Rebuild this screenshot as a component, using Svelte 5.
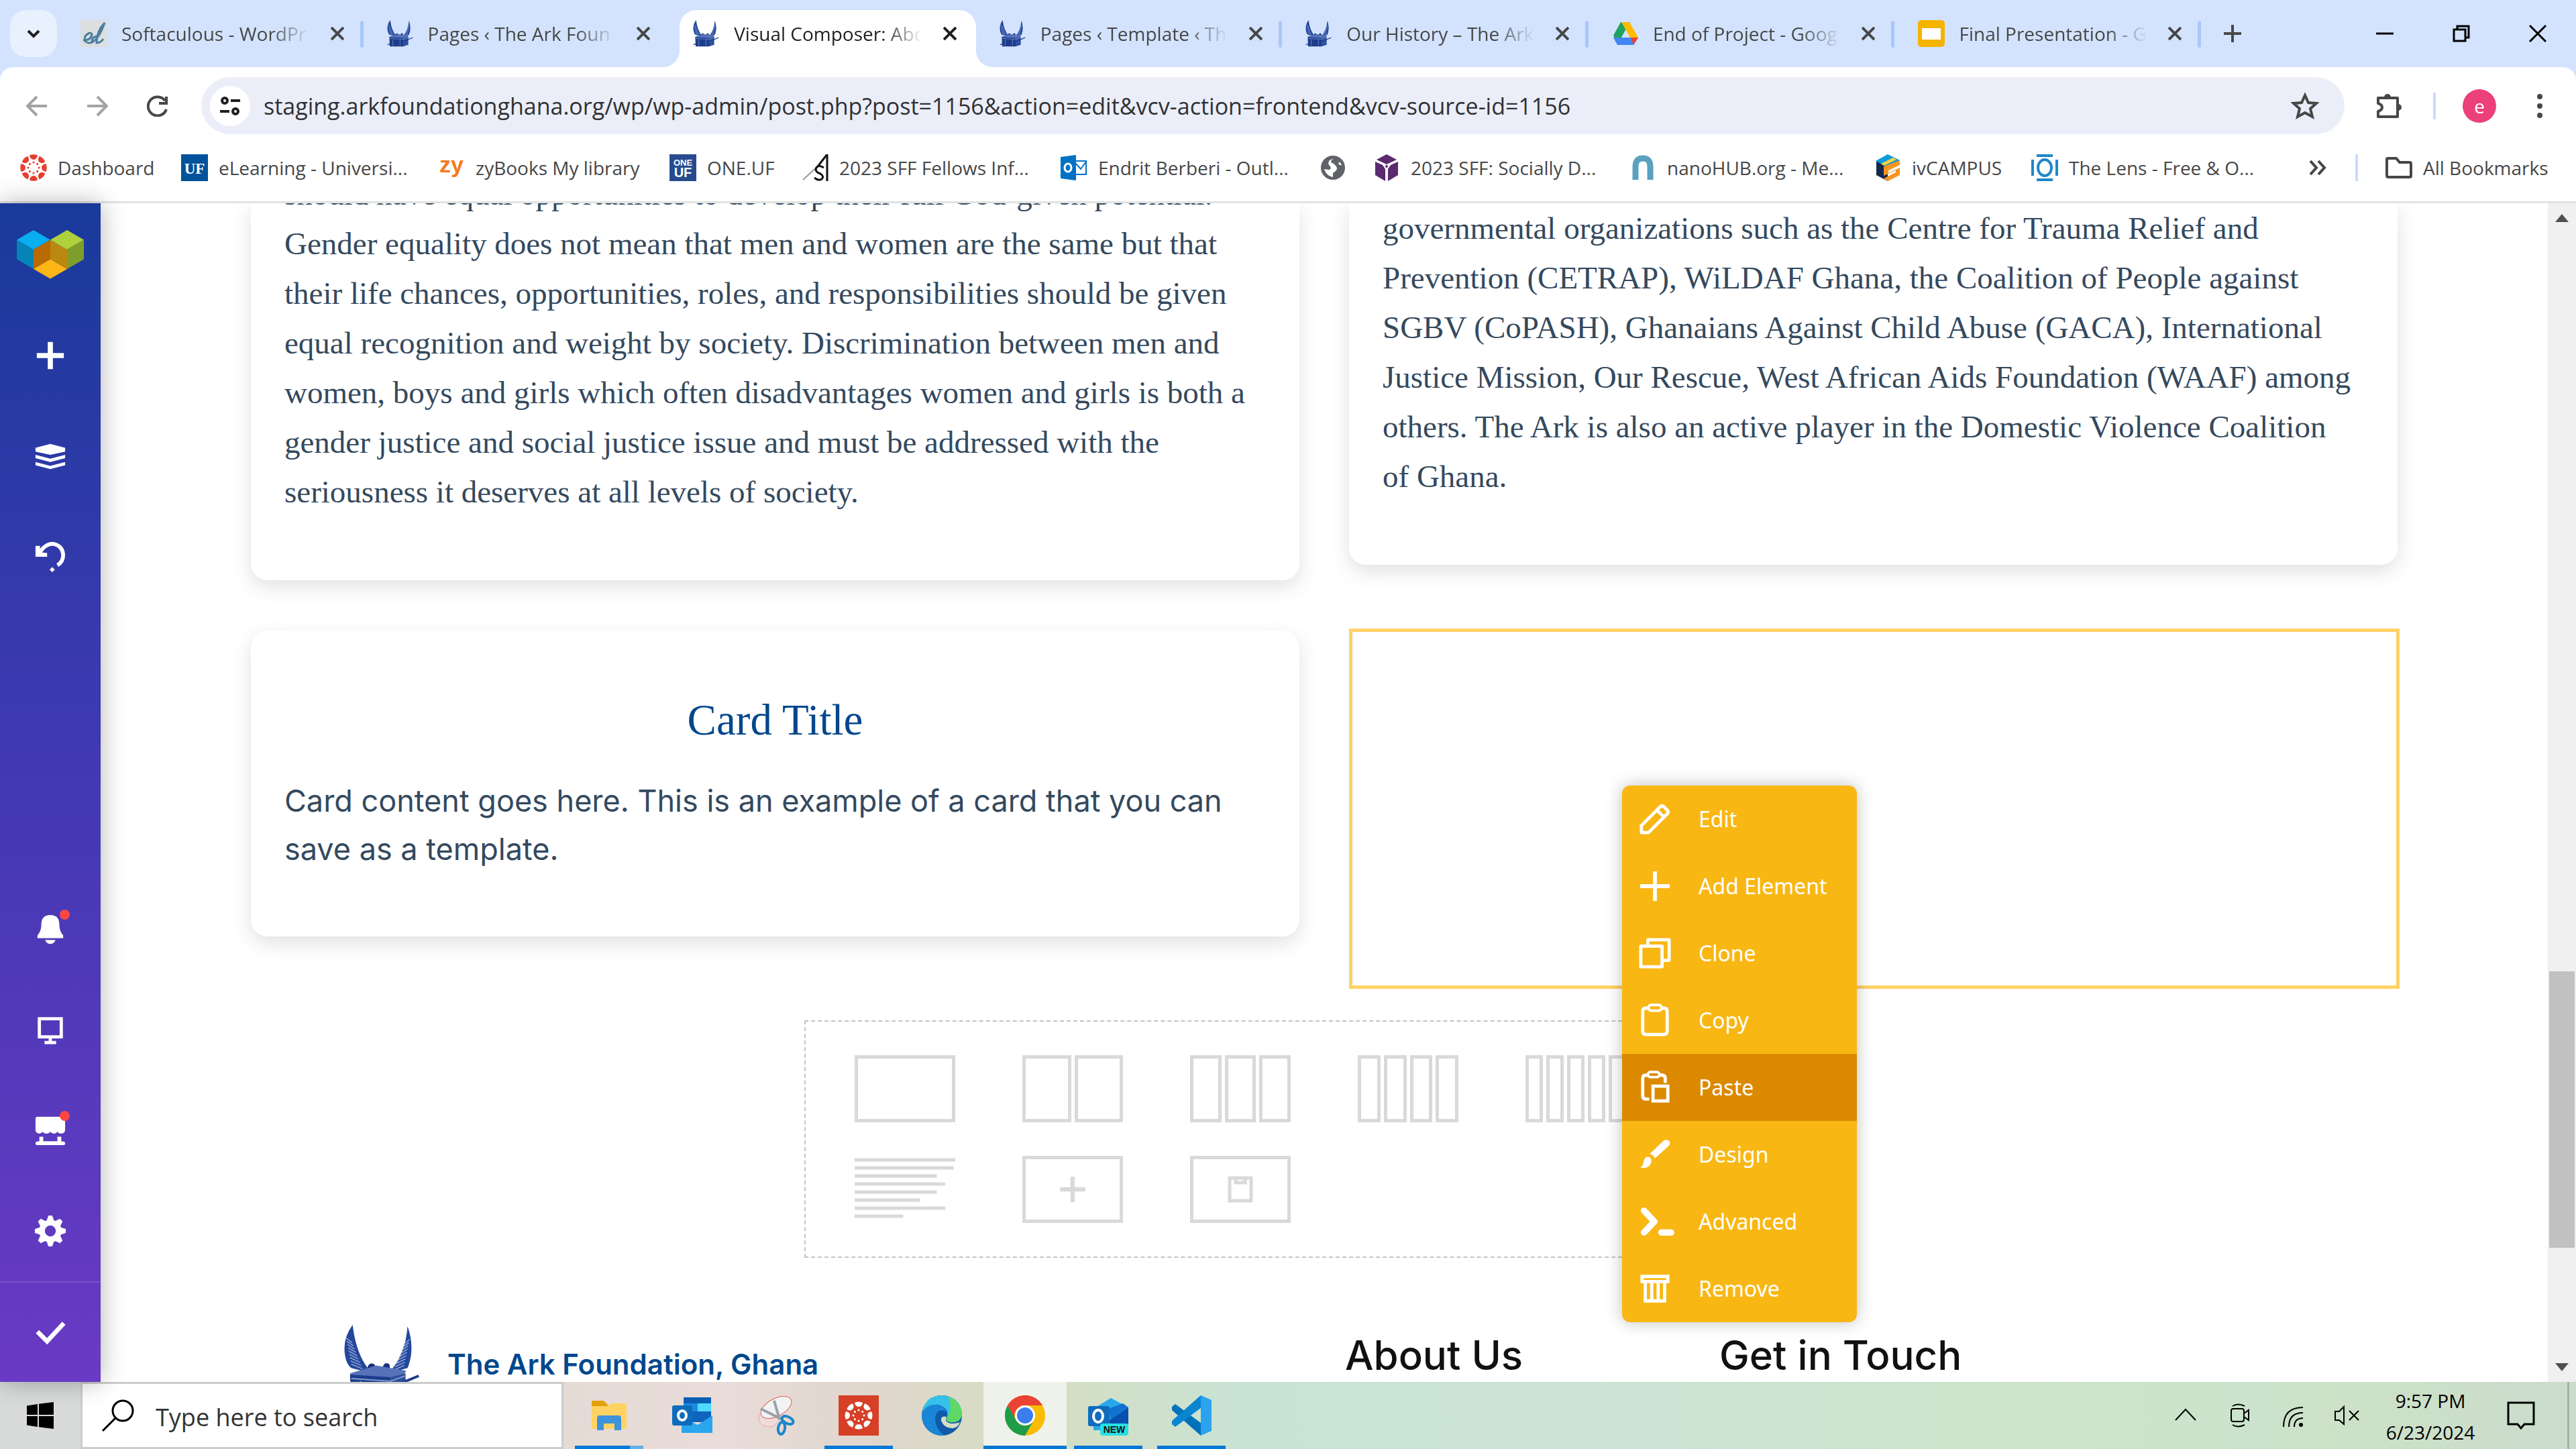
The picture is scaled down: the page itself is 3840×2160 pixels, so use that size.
<script>
  const tabs = [
    { title: 'Softaculous - WordPr', icon: 'soft' },
    { title: 'Pages ‹ The Ark Foun', icon: 'ark' },
    { title: 'Visual Composer: Abo', icon: 'ark', active: true },
    { title: 'Pages ‹ Template ‹ Th', icon: 'ark' },
    { title: 'Our History – The Ark', icon: 'ark' },
    { title: 'End of Project - Goog', icon: 'drive' },
    { title: 'Final Presentation - G', icon: 'slides' }
  ];
  const bookmarks = [
    ['canvas', 'Dashboard'],
    ['uf', 'eLearning - Universi...'],
    ['zy', 'zyBooks My library'],
    ['oneuf', 'ONE.UF'],
    ['sff', '2023 SFF Fellows Inf...'],
    ['outlook', 'Endrit Berberi - Outl...'],
    ['globe', ''],
    ['cube', '2023 SFF: Socially D...'],
    ['nano', 'nanoHUB.org - Me...'],
    ['iv', 'ivCAMPUS'],
    ['lens', 'The Lens - Free & O...']
  ];
  const leftLines = [
    'should have equal opportunities to develop their full God-given potential.',
    'Gender equality does not mean that men and women are the same but that',
    'their life chances, opportunities, roles, and responsibilities should be given',
    'equal recognition and weight by society. Discrimination between men and',
    'women, boys and girls which often disadvantages women and girls is both a',
    'gender justice and social justice issue and must be addressed with the',
    'seriousness it deserves at all levels of society.'
  ];
  const rightLines = [
    'governmental organizations such as the Centre for Trauma Relief and',
    'Prevention (CETRAP), WiLDAF Ghana, the Coalition of People against',
    'SGBV (CoPASH), Ghanaians Against Child Abuse (GACA), International',
    'Justice Mission, Our Rescue, West African Aids Foundation (WAAF) among',
    'others. The Ark is also an active player in the Domestic Violence Coalition',
    'of Ghana.'
  ];
  const menu = ['Edit', 'Add Element', 'Clone', 'Copy', 'Paste', 'Design', 'Advanced', 'Remove'];
  const topTools = ['Add', 'Tree', 'Undo'];
  const lowTools = ['Notifications', 'Device', 'Hub', 'Settings'];
  const apps = [
    { name: 'Explorer', open: true, many: true },
    { name: 'Outlook' },
    { name: 'Snip' },
    { name: 'Canvas', open: true },
    { name: 'Edge' },
    { name: 'Chrome', open: true, active: true },
    { name: 'New Outlook', open: true },
    { name: 'Code', open: true }
  ];
  const layouts = [1, 2, 3, 4, 5, 6];
  const textRows = [61, 59, 49, 54, 49, 39, 54, 29];
  const rays = [0, 45, 90, 135, 180, 225, 270, 315];
  const feathers = [0, 1, 2, 3, 4, 5, 6, 7, 8];
</script>

{#snippet arkLogo()}
  <svg viewBox="0 0 120 120" aria-hidden="true">
    <path fill="#24479b" d="M14 0Q-1 20 2 44Q4 60 12 66L44 74Q20 50 14 0ZM98 2Q94 50 68 74L98 66Q110 36 98 2Z" />
    <g stroke="#93a8d8" stroke-width="1.5" fill="none">
      {#each feathers as f}
        <path d="M{4 + f} {20 + f * 5}l{9 + f} 7M{101 - f} {22 + f * 5}l-{8 + f} 7" />
      {/each}
    </g>
    <path fill="#16307c" d="M36 68Q38 56 47 60L53 70ZM58 70Q62 54 70 60L72 70Z" />
    <path fill="#5673b9" d="M10 74L50 62L96 70L90 80L12 82Z" />
    <path fill="#1d3c8c" d="M10 76L72 80V118H12Z" />
    <path fill="#2d509f" d="M72 80L95 74V110L72 118Z" />
    <path stroke="#1d3c8c" stroke-width="4" d="M76 94L115 78M2 110L20 104" />
    <path stroke="#8ba0d2" stroke-width="2" d="M12 82L72 86L94 78M26 86V114M58 88V114" fill="none" />
  </svg>
{/snippet}

{#snippet favicon(name)}
  {#if name === 'ark'}
    {@render arkLogo()}
  {:else}
    <svg viewBox="0 0 40 40" aria-hidden="true">
      {#if name === 'soft'}
        <rect width="40" height="40" fill="#dcdedf" />
        <path fill="none" stroke="#4a7ea3" stroke-width="3" d="M4 30Q16 30 17 21Q14 16 7 24Q4 34 14 34Q26 32 36 4Q24 16 24 34Q30 34 34 28M24 24Q16 26 17 33" />
      {:else if name === 'drive'}
        <path fill="#1ea362" d="M13 4H27L9 36L2 24Z" transform="translate(0 -1)" />
        <path fill="#ffba00" d="M14 3H26L39 26H27Z" />
        <path fill="#4285f4" d="M9 26H39L32 37H8L2 26Z" />
        <path fill="#d3e3fd" d="M20 15L26 26H14Z" />
        <path fill="#ea4335" d="M28 26H39L32 37Z" />
      {:else if name === 'slides'}
        <rect width="40" height="40" rx="5" fill="#f5b400" />
        <rect x="6" y="12" width="28" height="17" fill="#fff" />
      {:else if name === 'canvas'}
        {#each rays as r}
          <g transform="rotate({r} 20 20)">
            <path fill="#e63f30" d="M14 1.500Q20 -1 26 1.500Q25 8 20 8Q15 8 14 1.500Z" />
            <circle cx="20" cy="12" r="1.600" fill="#e63f30" />
          </g>
        {/each}
      {:else if name === 'uf'}
        <rect width="40" height="40" fill="#00529b" />
        <text x="20" y="29" text-anchor="middle" class="slab" font-size="23" fill="#fff">UF</text>
      {:else if name === 'zy'}
        <text x="20" y="27" text-anchor="middle" class="heavy" font-size="34" fill="#f47a20">zy</text>
      {:else if name === 'oneuf'}
        <rect width="40" height="40" fill="#274b8e" />
        <text x="20" y="17" text-anchor="middle" class="heavy" font-size="13" fill="#fff">ONE</text>
        <text x="20" y="34" text-anchor="middle" class="heavy" font-size="20" fill="#fff">UF</text>
      {:else if name === 'sff'}
        <path stroke="#111" stroke-width="3" fill="none" d="M38 0V40M38 0L24 18" />
        <path stroke="#999" stroke-width="2" d="M26 16L2 38" />
        <path stroke="#111" stroke-width="3" fill="none" d="M33 20Q24 14 21 22Q21 27 28 29Q34 33 30 37Q25 40 19 35" />
      {:else if name === 'outlook'}
        <path fill="#0072c6" d="M0 4L23 1V39L0 36Z" />
        <path fill="#fff" stroke="#0072c6" stroke-width="2" d="M23 10H38V30H23M23 14L30 22L38 11" />
        <ellipse cx="11" cy="20" rx="5" ry="6" fill="none" stroke="#fff" stroke-width="3" />
      {:else if name === 'globe'}
        <circle cx="20" cy="20" r="18" fill="#5f6368" />
        <path fill="#fff" d="M23 5Q17 8 17 12Q21 13 24 17Q28 21 24 25L20 28V34Q10 32 7 22L13 23Q18 23 16 18Q11 14 15 9ZM30 11L33 16Q30 17 28 14Z" />
      {:else if name === 'cube'}
        <path fill="#5b2a6f" d="M20 0L35 8L20 15L5 8ZM3 11L14 16L18 22V40L3 31ZM37 11L26 16L22 22V40L37 31Z" />
        <circle cx="20" cy="18" r="2" fill="#5b2a6f" />
      {:else if name === 'nano'}
        <path fill="none" stroke="#5aa0bf" stroke-width="9" d="M9 38V18Q9 6 20 6Q31 6 31 18V38" />
      {:else if name === 'iv'}
        <path fill="#14284b" d="M3 10L20 19V40L3 31Z" />
        <path fill="#0a9bdc" d="M20 0L38 9L20 19L2 10Z" />
        <path fill="#ffd23f" d="M10 14L28 5L33 8L14 17Z" />
        <path fill="#f7941e" d="M14 18L38 9V16L21 24V28L38 20V31L20 40L14 36L32 27V24L14 32Z" />
      {:else if name === 'lens'}
        <path fill="#1f87c7" d="M8 0H32V4H8ZM8 36H32V40H8ZM0 8H4V32H0ZM36 8H40V32H36Z" />
        <ellipse cx="20" cy="20" rx="10" ry="12" fill="none" stroke="#1f87c7" stroke-width="4" />
      {/if}
    </svg>
  {/if}
{/snippet}

{#snippet glyph(name)}
  <svg viewBox="0 0 50 50" aria-hidden="true" fill="none" stroke="currentColor" stroke-width="5">
    {#if name === 'Edit'}
      <path stroke-linejoin="round" d="M4 46V35L33 6q3-3 6 0l5 5q3 3 0 6L15 46ZM29 12L38 21" />
    {:else if name === 'Add Element'}
      <path stroke-width="6" d="M25 2V48M2 25H48" />
    {:else if name === 'Clone'}
      <path stroke-linejoin="round" d="M3 14H36V46H3ZM14 14V4H47V36H36" />
    {:else if name === 'Copy'}
      <path d="M15 6H11Q6 6 6 11V42Q6 47 11 47H39Q44 47 44 42V11Q44 6 39 6H35" />
      <rect x="15" y="1" width="20" height="9" rx="4" stroke-width="4" />
    {:else if name === 'Paste'}
      <path d="M14 6H11Q6 6 6 11V38Q6 43 11 43H16M32 6H36Q41 6 41 11V18" />
      <rect x="14" y="1" width="18" height="8" rx="4" stroke-width="4" />
      <rect x="22" y="23" width="23" height="23" stroke-width="5" />
    {:else if name === 'Design'}
      <path fill="currentColor" stroke="none" d="M17 24L38 4Q43 0 47 4Q50 8 46 12L25 31Q23 26 17 24ZM2 45Q7 43 7 37Q9 27 16 29Q22 33 18 40Q13 48 2 45Z" />
    {:else if name === 'Advanced'}
      <path stroke-width="10" stroke-linecap="round" stroke-linejoin="round" d="M8 8L24 25L8 42" />
      <path stroke-width="10" stroke-linecap="round" d="M35 42H50" />
    {:else if name === 'Remove'}
      <path d="M5 6H45V14H5ZM10 14V44H40V14M20 16V44M30 16V44" />
    {:else if name === 'Add'}
      <path stroke-width="8" d="M25 4V46M4 25H46" />
    {:else if name === 'Tree'}
      <g fill="currentColor" stroke="none">
        <path d="M25 6L48 12V18L25 23L2 18V12ZM2 23L25 29L48 23V28L25 34L2 28ZM2 34L25 40L48 34V39L25 45L2 39Z" />
      </g>
    {:else if name === 'Undo'}
      <path stroke-width="6" d="M8 19Q18 4 30 5Q44 8 45 22Q45 33 36 38" />
      <path fill="currentColor" stroke="none" d="M2 8H9V18L20 19V25H2ZM28 41L32 45L28 49L24 45Z" />
    {:else if name === 'Notifications'}
      <path fill="currentColor" stroke="none" d="M25 3Q39 3 39 18Q39 28 45 35V39H5V35Q11 28 11 18Q11 3 25 3ZM17 42H33Q31 48 25 48Q19 48 17 42Z" />
    {:else if name === 'Device'}
      <path d="M8 8H42V36H8ZM25 36V44M16 45H34" />
    {:else if name === 'Hub'}
      <path fill="currentColor" stroke="none" d="M2 7Q2 4 5 4H45Q48 4 48 7V25Q47 30 42 30Q38 30 36 27Q34 30 30 30Q27 30 25 27Q23 30 19 30Q15 30 13 27Q11 30 8 30Q3 30 2 25ZM8 35H14V42H36V35H42V42Q48 42 48 45Q48 48 45 48H5Q2 48 2 45Q2 42 8 42Z" />
    {:else if name === 'Settings'}
      <circle cx="25" cy="25" r="13" stroke-width="9" />
      {#each rays as r}
        <path fill="currentColor" stroke="none" d="M19 10L22 1H28L31 10Z" transform="rotate({r} 25 25)" />
      {/each}
    {:else if name === 'Save'}
      <path stroke-width="7" d="M5 24L20 39L46 11" />
    {/if}
  </svg>
{/snippet}

{#snippet appIcon(name)}
  <svg viewBox="0 0 60 60" aria-hidden="true">
    {#if name === 'Explorer'}
      <path fill="#e3a008" d="M4 8H22L28 14V20H4Z" />
      <path fill="#ffd262" d="M4 16H28L32 12H56V48Q56 50 54 50H4Z" />
      <path fill="#3c93dc" d="M12 52V34Q12 30 16 30H44Q48 30 48 34V52H38V42H22V52Z" />
    {:else if name === 'Outlook'}
      <path fill="#0a5fb4" d="M17 3H58V14H17Z" />
      <path fill="#1a8be0" d="M17 12H38V24H17Z" />
      <path fill="#50d9ff" d="M38 12H58V24H38Z" />
      <path fill="#0f64bd" d="M17 24H58V40H17Z" />
      <path fill="#2aa6ee" d="M60 30V56H14V32L38 44Z" />
      <rect y="15" width="30" height="30" rx="3" fill="#0f6cbd" />
      <ellipse cx="15" cy="30" rx="6" ry="7" fill="none" stroke="#fff" stroke-width="4" />
    {:else if name === 'Snip'}
      <ellipse cx="20" cy="34" rx="15" ry="13" fill="#efdcda" stroke="#e8a9a5" stroke-width="1" />
      <ellipse cx="31" cy="18" rx="25" ry="13" transform="rotate(-28 31 18)" fill="#f1f2f4" stroke="#e2605c" stroke-width="1" />
      <path stroke="#9aa0a6" stroke-width="4" d="M28 8L36 36M8 20L40 36" />
      <g fill="none" stroke="#1d87c9" stroke-width="4">
        <ellipse cx="48" cy="37" rx="9" ry="5" transform="rotate(25 48 37)" />
        <ellipse cx="39" cy="49" rx="5" ry="9" transform="rotate(8 39 49)" />
      </g>
    {:else if name === 'Canvas'}
      <rect width="60" height="60" fill="#d64027" />
      {#each rays as r}
        <g transform="rotate({r} 30 30)">
          <path fill="#fff" d="M24 11Q30 8 36 11Q35 17 30 17Q25 17 24 11Z" />
          <circle cx="30" cy="22" r="1.500" fill="#fff" />
        </g>
      {/each}
    {:else if name === 'Edge'}
      <circle cx="30" cy="30" r="30" fill="#0f5ba8" />
      <path fill="#35c1e8" d="M1 26Q5 0 30 0Q58 2 60 28Q58 42 42 40Q34 38 38 32Q40 18 24 14Q8 14 1 26Z" />
      <path fill="#5fd868" d="M40 2Q60 10 60 28Q58 42 42 40Q34 38 38 32Q46 20 40 2Z" />
      <path fill="#1a86d8" d="M0 30Q4 14 20 14Q34 16 36 24Q22 18 20 34Q20 50 34 60Q4 60 0 30Z" />
      <path fill="#d8dcc6" d="M37 32Q33 40 44 42Q52 42 57 40Q54 48 47 49Q34 50 29 38Q28 30 37 32Z" />
    {:else if name === 'Chrome'}
      <circle cx="30" cy="30" r="30" fill="#fbbc04" />
      <path fill="#ea4335" d="M4 15A30 30 0 0 1 56 15H30A15 15 0 0 0 16 37Z" />
      <path fill="#1e9c4a" d="M4 15A30 30 0 0 0 30 60L43 37.500A15 15 0 0 1 17 37.500Z" />
      <circle cx="30" cy="30" r="15" fill="#fff" />
      <circle cx="30" cy="30" r="12" fill="#3b7ded" />
    {:else if name === 'New Outlook'}
      <path fill="#28a8ea" d="M8 20L34 4L60 18V52H8Z" />
      <path fill="#0a4fae" d="M30 38L60 18V42L40 52Z" />
      <path fill="#1272d0" d="M30 20L52 12L60 18L34 36Z" />
      <rect y="16" width="32" height="30" rx="3" fill="#0f6cbd" />
      <ellipse cx="15" cy="31" rx="7" ry="9" fill="none" stroke="#fff" stroke-width="4" />
      <rect x="18" y="42" width="42" height="18" rx="4" fill="#27e0e4" />
      <text x="39" y="56" text-anchor="middle" class="heavy" font-size="14" fill="#111">NEW</text>
    {:else if name === 'Code'}
      <path fill="#0072ba" d="M1 17L6 13L48 44V56L44 60L1 22Z" />
      <path fill="#0a86d1" d="M1 43L6 47L48 16V4L44 0L1 38Z" />
      <path fill="#2ba3ee" d="M44 0L60 7V53L44 60Z" />
    {/if}
  </svg>
{/snippet}

<div class="screen">
  <header class="browser">
    <div class="strip">
      <button class="search-tabs" aria-label="Search tabs">
        <svg viewBox="0 0 24 24" aria-hidden="true"><path d="M4 8l8 8 8-8" fill="none" stroke="#1f1f1f" stroke-width="4" /></svg>
      </button>
      <nav class="tabs" aria-label="Tabs">
        {#each tabs as tab, i}
          <div class="tab" class:active={tab.active} class:ruled={i !== 1 && i !== 2}>
            <button class="tab-main"><span class="fav">{@render favicon(tab.icon)}</span><span class="tab-title">{tab.title}</span></button>
            <button class="tab-x" aria-label="Close tab">
              <svg viewBox="0 0 20 20" aria-hidden="true"><path d="M1 1L19 19M19 1L1 19" stroke="currentColor" stroke-width="4" /></svg>
            </button>
          </div>
        {/each}
      </nav>
      <button class="new-tab" aria-label="New tab">
        <svg viewBox="0 0 26 26" aria-hidden="true"><path d="M13 0V26M0 13H26" stroke="#474747" stroke-width="4" /></svg>
      </button>
      <div class="window-buttons">
        <button aria-label="Minimize"><svg viewBox="0 0 26 26" aria-hidden="true"><path d="M0 13H26" stroke="#000" stroke-width="3" /></svg></button>
        <button aria-label="Restore"><svg viewBox="0 0 26 26" aria-hidden="true"><path d="M2 7H19V24H2ZM7 7V2H24V19H19" fill="none" stroke="#000" stroke-width="3" /></svg></button>
        <button aria-label="Close window"><svg viewBox="0 0 26 26" aria-hidden="true"><path d="M1 1L25 25M25 1L1 25" stroke="#000" stroke-width="3" /></svg></button>
      </div>
    </div>

    <div class="toolbar">
      <div class="nav-buttons">
        <button aria-label="Back" class="dim"><svg viewBox="0 0 32 32" aria-hidden="true"><path d="M31 16H3M16 2L2 16L16 30" /></svg></button>
        <button aria-label="Forward" class="dim"><svg viewBox="0 0 32 32" aria-hidden="true"><path d="M1 16H29M16 2L30 16L16 30" /></svg></button>
        <button aria-label="Reload"><svg viewBox="0 0 32 32" aria-hidden="true"><path d="M27 8A14 14 0 1 0 29 21M29 2V12H18" /></svg></button>
      </div>
      <div class="address">
        <button class="site-info" aria-label="Site information">
          <svg viewBox="0 0 32 32" aria-hidden="true" fill="none" stroke="#1f1f1f" stroke-width="4"><circle cx="8" cy="8" r="4" /><path d="M17 8H31M1 24H15" /><circle cx="24" cy="24" r="4" /></svg>
        </button>
        <input aria-label="Address" value="staging.arkfoundationghana.org/wp/wp-admin/post.php?post=1156&action=edit&vcv-action=frontend&vcv-source-id=1156" />
        <button class="star" aria-label="Bookmark this page">
          <svg viewBox="0 0 42 42" aria-hidden="true"><path d="M21 5L26 16L38 17L29 25L32 37L21 31L10 37L13 25L4 17L16 16Z" fill="none" stroke="#474747" stroke-width="4" /></svg>
        </button>
      </div>
      <div class="tools">
        <button aria-label="Extensions"><svg viewBox="0 0 42 42" aria-hidden="true"><path d="M4 9H33V37H4V29Q10 27 10 23Q10 19 4 17Z" fill="none" stroke="#474747" stroke-width="4" stroke-linejoin="round" /><path d="M13 8a5 5 0 0 1 10 0zM34 18a5 5 0 0 1 0 10z" fill="#474747" /></svg></button>
        <span class="rule"></span>
        <button class="avatar" aria-label="Profile">e</button>
        <button aria-label="Menu"><svg viewBox="0 0 42 42" aria-hidden="true" fill="#474747"><circle cx="21" cy="7" r="4" /><circle cx="21" cy="21" r="4" /><circle cx="21" cy="35" r="4" /></svg></button>
      </div>
    </div>

    <div class="bookmarks">
      <nav class="marks" aria-label="Bookmarks">
        {#each bookmarks as [icon, label]}
          <a href="#top" aria-label={label || 'Site'}><span class="fav">{@render favicon(icon)}</span>{label}</a>
        {/each}
      </nav>
      <div class="marks-end">
        <button aria-label="More bookmarks" class="more"><svg viewBox="0 0 26 26" aria-hidden="true"><path d="M2 3L11 13L2 23M14 3L23 13L14 23" fill="none" stroke="#474747" stroke-width="4" /></svg></button>
        <span class="rule"></span>
        <a href="#all"><span class="fav"><svg viewBox="0 0 40 40" aria-hidden="true"><path d="M2 7Q2 6 4 6H16L21 12H36Q38 12 38 14V32Q38 34 36 34H4Q2 34 2 32Z" fill="none" stroke="#474747" stroke-width="4" /></svg></span>All Bookmarks</a>
      </div>
    </div>
  </header>

  <div class="work">
    <aside class="side">
      <a class="vc" href="#vc" aria-label="Visual Composer">
        <svg viewBox="0 0 100 73" aria-hidden="true">
          <path fill="#09aeef" d="M0 14.500L25 0L50 14.500L25 29Z" /><path fill="#0584b6" d="M0 14.500L25 29V58L0 43.500Z" />
          <path fill="#b96a00" d="M25 29L50 14.500V43.500L25 58Z" /><path fill="#bb880f" d="M50 14.500L75 29V58L50 43.500Z" />
          <path fill="#afd13c" d="M50 14.500L75 0L100 14.500L75 29Z" /><path fill="#7f9d2c" d="M75 29L100 14.500V43.500L75 58Z" />
          <path fill="#fcb716" d="M25 58L50 43.500L75 58L50 72.500Z" />
        </svg>
      </a>
      {#each topTools as t}
        <button aria-label={t}>{@render glyph(t)}</button>
      {/each}
      <span class="spacer"></span>
      {#each lowTools as t}
        <button aria-label={t}>{@render glyph(t)}{#if t === 'Notifications' || t === 'Hub'}<i class="dot"></i>{/if}</button>
      {/each}
      <button class="save" aria-label="Save">{@render glyph('Save')}</button>
    </aside>

    <main class="page">
      <div class="cards">
        <article class="card cut scrolled">
          <p class="serif">{#each leftLines as l}<span>{l}</span>{/each}</p>
        </article>
        <article class="card cut">
          <p class="serif">{#each rightLines as l}<span>{l}</span>{/each}</p>
        </article>
        <article class="card sample">
          <h2>Card Title</h2>
          <p class="sans"><span>Card content goes here. This is an example of a card that you can</span><span>save as a template.</span></p>
        </article>
        <div class="empty">
          <div class="menu" role="menu">
            {#each menu as m}
              <button role="menuitem" class:hot={m === 'Paste'}>{@render glyph(m)}<span>{m}</span></button>
            {/each}
          </div>
        </div>
      </div>

      <div class="adder">
        {#each layouts as n}
          <button class="cols" aria-label="{n} columns">{#each { length: n } as _}<i></i>{/each}</button>
        {/each}
        <button aria-label="Text block">
          <svg viewBox="0 0 150 100" aria-hidden="true" stroke="#d9d9d9" stroke-width="5">
            {#each textRows as w, i}<path d="M0 {6 + i * 12}H{w * 5 / 2}" />{/each}
          </svg>
        </button>
        <button class="cols" aria-label="Add element"><i><svg viewBox="0 0 30 30" aria-hidden="true"><path d="M15 0V30M0 15H30" stroke="#d9d9d9" stroke-width="5" /></svg></i></button>
        <button class="cols" aria-label="Template"><i><svg viewBox="0 0 38 40" aria-hidden="true" fill="none" stroke="#d9d9d9" stroke-width="5"><path d="M3 3H35V37H3ZM12 3V10H26V3" /></svg></i></button>
      </div>

      <footer class="foot">
        <div class="brand"><span class="logo">{@render arkLogo()}</span><strong>The Ark Foundation, Ghana</strong></div>
        <h3>About Us</h3>
        <h3>Get in Touch</h3>
      </footer>
    </main>

    <div class="scroll" aria-hidden="true">
      <svg viewBox="0 0 20 14"><path d="M10 1L20 13H0Z" fill="#505050" /></svg>
      <span class="track"><span class="thumb"></span></span>
      <svg viewBox="0 0 20 14"><path d="M0 1H20L10 13Z" fill="#505050" /></svg>
    </div>
  </div>

  <footer class="taskbar">
    <button class="start" aria-label="Start">
      <svg viewBox="0 0 40 40" aria-hidden="true"><path d="M0 5.500L16 3V19H0ZM18 2.700L40 0V19H18ZM0 21H16V37L0 34.500ZM18 21H40V40L18 37.300Z" /></svg>
    </button>
    <label class="find">
      <svg viewBox="0 0 50 50" aria-hidden="true"><circle cx="32" cy="18" r="15" fill="none" stroke="#000" stroke-width="3" /><path d="M21 29L2 48" stroke="#000" stroke-width="3" /></svg>
      <input aria-label="Search" placeholder="Type here to search" />
    </label>
    <nav class="apps" aria-label="Apps">
      {#each apps as a}
        <button class:open={a.open} class:active={a.active} class:many={a.many} aria-label={a.name}>{@render appIcon(a.name)}</button>
      {/each}
    </nav>
    <div class="tray">
      <button aria-label="Hidden icons"><svg viewBox="0 0 40 40" aria-hidden="true"><path d="M5 27L20 11L35 27" /></svg></button>
      <button aria-label="Camera"><svg viewBox="0 0 40 40" aria-hidden="true"><path d="M11 10H24Q27 10 27 13V26Q27 29 24 29H11Q8 29 8 26V13Q8 10 11 10M27 17L34 12V27L27 22M10 6Q18 1 28 6M10 34Q18 39 28 34" /></svg></button>
      <button aria-label="Network"><svg viewBox="0 0 40 40" aria-hidden="true"><path d="M6 37Q6 8 35 8M14 37Q14 16 35 16M22 37Q22 24 35 24" /><circle cx="32" cy="34" r="2" fill="#000" /></svg></button>
      <button aria-label="Volume"><svg viewBox="0 0 40 40" aria-hidden="true"><path d="M3 14H9L16 7V33L9 27H3ZM24 13L38 27M38 13L24 27" /></svg></button>
      <button class="clock"><span>9:57 PM</span><span>6/23/2024</span></button>
      <button class="notes" aria-label="Notifications"><svg viewBox="0 0 42 42" aria-hidden="true"><path d="M2 2H40V34H26L21 40L16 34H2Z" /></svg></button>
      <span class="desk"></span>
    </div>
  </footer>
</div>

<style>
  :global(body) { margin: 0; background: #fff; }
  * { box-sizing: border-box; }
  button, input { font: inherit; color: inherit; border: 0; background: none; padding: 0; margin: 0; outline: 0; }
  button { display: flex; align-items: center; justify-content: center; flex: none; }
  a { color: inherit; text-decoration: none; }
  svg { display: block; flex: none; }
  p, h2, h3 { margin: 0; }
  .heavy { font-family: "Liberation Sans", sans-serif; font-weight: 700; }
  .slab { font-family: "Liberation Serif", serif; font-weight: 700; }

  .screen { height: 100vh; display: flex; flex-direction: column; overflow: hidden; font: 28px/40px "Open Sans", sans-serif; color: #474747; }
  .fav { width: 40px; height: 40px; flex: none; }
  .fav :global(svg) { width: 40px; height: 40px; }

  .browser { flex: none; background: #d3e3fd; border-bottom: 3px solid #e0e3e1; }
  .strip { display: flex; align-items: center; height: 100px; padding-left: 15px; }
  .search-tabs { width: 70px; height: 70px; border-radius: 24px; background: #e9f1fe; }
  .search-tabs svg { width: 24px; height: 24px; }
  .tabs { display: flex; flex: 0 1 3196px; min-width: 0; height: 100px; }
  .tab { flex: 1 1 0; min-width: 0; display: flex; align-items: center; padding: 0 14px 0 35px; position: relative; }
  .tab.ruled::after { content: ""; position: absolute; right: 0; top: 31px; width: 5px; height: 40px; border-radius: 3px; background: #a8c7fa; }
  .tab.active { color: #1f1f1f; z-index: 1; }
  .tab.active::before { content: ""; position: absolute; z-index: -1; inset: 15px 0 0 15px; background: #fff; border-radius: 25px 25px 0 0; }
  .tab.active::after { content: ""; position: absolute; z-index: -1; left: -10px; right: -25px; bottom: 0; height: 25px; background: radial-gradient(circle at 0 0, transparent 25px, #fff 25px) left / 25px 25px no-repeat, radial-gradient(circle at 100% 0, transparent 25px, #fff 25px) right / 25px 25px no-repeat; }
  .tab-main { flex: 1; min-width: 0; justify-content: flex-start; gap: 21px; }
  .tab-title { flex: 1; min-width: 0; text-align: left; white-space: nowrap; overflow: hidden; -webkit-mask-image: linear-gradient(90deg, #000 calc(100% - 60px), transparent); mask-image: linear-gradient(90deg, #000 calc(100% - 60px), transparent); }
  .tab-x { width: 50px; height: 50px; margin-left: 16px; }
  .tab-x svg { width: 20px; height: 20px; }
  .new-tab { width: 70px; height: 70px; margin-left: 12px; }
  .new-tab svg, .window-buttons svg { width: 26px; height: 26px; }
  .window-buttons { display: flex; margin-left: auto; }
  .window-buttons button { width: 114px; height: 100px; }

  .toolbar { display: flex; align-items: center; height: 115px; padding: 0 10px; background: #fff; border-radius: 20px 20px 0 0; }
  .nav-buttons { display: flex; width: 290px; }
  .nav-buttons button { width: 90px; height: 70px; }
  .nav-buttons svg { width: 32px; height: 32px; fill: none; stroke: #474747; stroke-width: 4; }
  .nav-buttons .dim svg { stroke: #a3a3a3; }
  .address { flex: 1; display: flex; align-items: center; height: 85px; border-radius: 43px; background: #ebeef8; padding: 0 38px 0 13px; }
  .site-info { width: 60px; height: 60px; border-radius: 50%; background: #fff; }
  .site-info svg { width: 32px; height: 32px; }
  .address input { flex: 1; min-width: 0; margin-left: 20px; font-size: 34px; line-height: 60px; height: 60px; color: #303134; }
  .star svg, .tools svg { width: 42px; height: 42px; }
  .tools { display: flex; align-items: center; width: 335px; padding-left: 46px; }
  .rule { width: 4px; height: 40px; background: #c9dcfb; flex: none; }
  .tools .rule { margin: 0 40px 0 44px; }
  .avatar { width: 50px; height: 50px; border-radius: 50%; background: #ec407a; color: #fff; font-size: 28px; line-height: 40px; margin-right: 44px; }

  .bookmarks { display: flex; height: 85px; padding: 0 34px 15px 30px; background: #fff; align-items: center; font-size: 28px; }
  .marks { flex: 1; min-width: 0; display: grid; grid-template-columns: 240fr 383fr 345fr 197fr 386fr 386fr 80fr 382fr 365fr 234fr 412fr; }
  .marks a, .marks-end a { display: flex; align-items: center; gap: 16px; white-space: nowrap; min-width: 0; }
  .marks-end { display: flex; align-items: center; width: 366px; }
  .marks-end .rule { margin: 0 41px; }
  .more svg { width: 26px; height: 26px; }
  .more { width: 30px; height: 40px; }

  .work { flex: 1; min-height: 0; display: flex; background: #fff; }
  .side { width: 150px; flex: none; display: flex; flex-direction: column; color: #fff; background: linear-gradient(#193a9b, #4339b4 50%, #6a3ac4); box-shadow: 0 0 35px rgba(0, 0, 0, .3); z-index: 2; }
  .side button { height: 150px; width: 150px; position: relative; }
  .side :global(svg) { width: 48px; height: 48px; }
  .vc { flex: 0 0 152px; display: flex; align-items: center; justify-content: center; }
  .side .vc svg { width: 100px; height: 73px; }
  .spacer { flex: 1; }
  .dot { position: absolute; left: 89px; top: 46px; width: 15px; height: 15px; border-radius: 50%; background: #ff4642; }
  .side .save { border-top: 2px solid #7a50cb; }

  .page { flex: 1; min-width: 0; overflow: hidden; }
  .cards { display: grid; grid-template-columns: repeat(2, minmax(0, 1fr)); column-gap: 74px; row-gap: 75px; padding: 0 224px; align-items: start; }
  .card { border-radius: 25px; background: #fff; box-shadow: 0 10px 30px rgba(0, 0, 0, .12); padding: 50px; color: #34495e; }
  .card.cut { padding: 0 50px 95px; border-radius: 0 0 25px 25px; }
  .card p span { display: block; white-space: nowrap; }
  .serif { font: 47px/74px "Liberation Serif", serif; }
  .scrolled .serif { margin-top: -51px; }
  .sample { padding: 93px 50px 94px; }
  .sample h2 { font: 400 65px/80px "Liberation Serif", serif; color: #00478c; text-align: center; margin-bottom: 45px; }
  .sans { font: 400 45px/72px Inter, sans-serif; }
  .empty { position: relative; height: 537px; margin: -3px -3px -3px 0; border: 5px solid #ffd166; }

  .menu { position: absolute; z-index: 3; left: 402px; top: 229px; width: 350px; border-radius: 12px; overflow: hidden; background: #f9b714; color: #fff; box-shadow: 0 0 25px rgba(0, 0, 0, .25); font: 32px/40px "Noto Sans", sans-serif; }
  .menu button { width: 100%; height: 100px; justify-content: flex-start; gap: 41px; padding-left: 25px; }
  .menu .hot { background: #db8a00; }
  .menu :global(svg) { width: 48px; height: 48px; overflow: visible; }

  .adder { width: 1550px; margin: 50px auto 0; padding: 50px 23px; border: 2px dashed #c4c4c4; display: grid; grid-template-columns: repeat(6, 1fr); row-gap: 50px; justify-items: center; }
  .adder button { width: 150px; height: 100px; }
  .adder .cols { gap: 5px; align-items: stretch; }
  .cols i { flex: 1; border: 5px solid #d9d9d9; display: flex; align-items: center; justify-content: center; }
  .adder button > svg { width: 150px; height: 100px; }
  .cols i svg { width: 38px; height: 40px; }

  .foot { display: grid; grid-template-columns: 1493fr 558fr 1235fr; padding: 100px 0 0 362px; font-family: Inter, sans-serif; color: #111; }
  .brand { display: flex; gap: 38px; }
  .logo, .logo :global(svg) { width: 117px; height: 117px; }
  .brand strong { font-size: 42px; line-height: 60px; padding-top: 29px; font-weight: 600; color: #00478c; white-space: nowrap; }
  .foot h3 { font-size: 60px; line-height: 80px; font-weight: 500; padding-top: 5px; white-space: nowrap; }

  .scroll { width: 42px; flex: none; background: #f0f0f0; display: flex; flex-direction: column; align-items: center; padding: 15px 0; }
  .scroll svg { width: 20px; height: 14px; }
  .track { flex: 1; width: 100%; display: grid; grid-template-rows: 1116fr 412fr 171fr; padding: 0 2px; }
  .thumb { grid-row: 2; background: #c1c1c1; }

  .taskbar { height: 100px; flex: none; display: flex; background: linear-gradient(90deg, #d9dada 0, #d9dada 3%, #e5dbd5 22%, #eadcd9 28%, #dfd6cc 34%, #d8dcc6 38%, #d3dfc5 42%, #c9e3d4 48%, #cbe4d6 60%, #cde5ca 80%, #cbe3cc 88%, #cde2c7 90%, #cbdccc 100%); color: #000; }
  .start { width: 120px; }
  .start svg { width: 40px; height: 40px; }
  .find { width: 720px; display: flex; align-items: center; background: #fff; border: 3px solid #ccc; padding-left: 28px; color: #333; }
  .find svg { width: 50px; height: 50px; }
  .find input { flex: 1; min-width: 0; margin-left: 31px; font-size: 36px; line-height: 60px; height: 64px; padding-top: 4px; }
  .find input::placeholder { color: #333; opacity: 1; }
  .apps { display: flex; padding-left: 6px; }
  .apps button { width: 124px; position: relative; }
  .apps :global(svg) { width: 60px; height: 60px; }
  .apps .open::after { content: ""; position: absolute; left: 11px; right: 11px; bottom: 0; height: 5px; background: #0078d7; }
  .apps .many::after { background: linear-gradient(90deg, #0078d7 80%, #66aee7 80%); }
  .apps .active { background: #eef2ea; }
  .apps .active::after { left: 0; right: 0; }
  .tray { margin-left: auto; display: flex; }
  .tray button { width: 80px; }
  .tray svg { width: 40px; height: 40px; fill: none; stroke: #000; stroke-width: 2; }
  .tray .clock { width: 170px; flex-direction: column; line-height: 47px; font-size: 28px; padding-top: 4px; }
  .tray .notes { width: 100px; }
  .notes svg { width: 42px; height: 42px; stroke-width: 3; }
  .desk { width: 13px; margin-left: 19px; border-left: 3px solid #a3b3a3; }
</style>
